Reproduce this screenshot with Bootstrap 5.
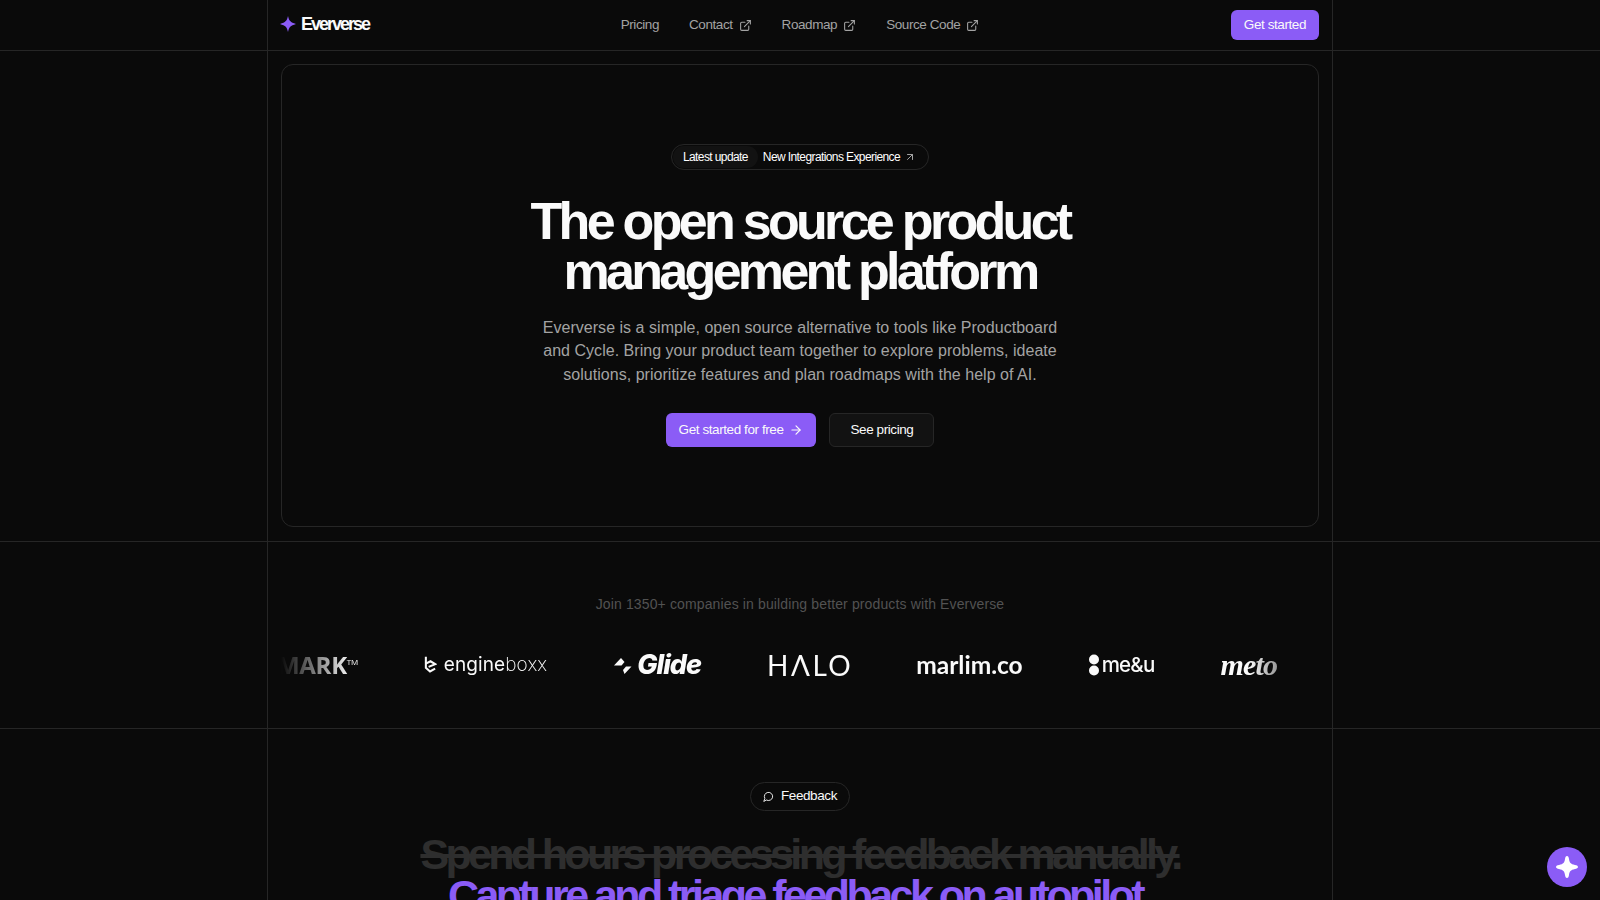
<!DOCTYPE html>
<html lang="en">

<head>
    <meta charset="UTF-8" />
    <meta name="viewport" content="width=device-width, initial-scale=1" />
    <title>Eververse</title>
    <link href="https://cdn.jsdelivr.net/npm/bootstrap@5.3.0/dist/css/bootstrap.min.css" rel="stylesheet" />
    <style>
        html, body { height: 900px; overflow: hidden; }
        body { background: #0a0a0a; color: #fafafa; font-family: "Liberation Sans", Arial, sans-serif; }
        a { text-decoration: none; }
        .ev-band { border-bottom: 1px solid #262626; }
        .ev-shell { width: 1066px; margin: 0 auto; border-inline: 1px solid #262626; padding-inline: 13px; }
        .ev-head { height: 50px; }
        .ev-side { flex: 1 1 0; }
        .ev-brand { font-size: 18px; font-weight: 700; letter-spacing: -2px; color: #fafafa; line-height: 26px; gap: 5px; }
        .ev-brand svg { width: 16px; height: 16px; margin-left: -1px; }
        .ev-link { font-size: 13.5px; letter-spacing: -0.42px; color: #a3a3a3; gap: 6px; }
        .ev-link svg { width: 13px; height: 13px; }
        .ev-nav { gap: 30px; }
        .ev-btn-primary { background: #8b5cf6; border: 0; color: #fafafa; font-size: 13.5px; letter-spacing: -0.42px; border-radius: 6px; height: 30px; padding: 0 13px; }
        .ev-hero-wrap { padding: 13px 13px 14px; }
        .ev-hero { height: 463px; border: 1px solid #262626; border-radius: 12px; padding-top: 79px; }
        .ev-pill { height: 26px; border: 1px solid #262626; border-radius: 13px; font-size: 12px; letter-spacing: -0.6px; padding: 1px 12px 1px 1px; }
        .ev-pill-tag { background: #121212; border-radius: 12px; padding: 0 10px; height: 22px; line-height: 22px; margin-right: 5px; }
        .ev-pill svg { width: 12px; height: 12px; margin-left: 4px; color: #a3a3a3; }
        .ev-title { font-size: 52px; line-height: 50px; font-weight: 700; letter-spacing: -3.7px; margin: 26px 0 0; }
        .ev-lede { width: 530px; font-size: 16px; letter-spacing: 0.03px; line-height: 23.4px; color: #a3a3a3; margin: 20px 0 0; }
        .ev-cta { margin-top: 27px; gap: 13px; }
        .ev-cta .ev-btn-primary { height: 34px; padding: 0 13px; }
        .ev-cta svg { width: 14px; height: 14px; margin-left: 6px; }
        .ev-btn-dark { background: #121212; border: 1px solid #262626; color: #fafafa; font-size: 13.5px; letter-spacing: -0.42px; border-radius: 6px; height: 34px; padding: 0 20px; }
        .ev-logos { height: 186px; padding-top: 52px; }
        .ev-join { font-size: 14px; letter-spacing: 0.13px; color: #525252; text-align: center; line-height: 20px; margin: 0; }
        .ev-strip { margin-top: 21px; height: 60px; gap: 66px; overflow: hidden; color: #fafafa;
            -webkit-mask-image: linear-gradient(to right, transparent, #000 70px, #000 calc(100% - 70px), transparent);
            mask-image: linear-gradient(to right, transparent, #000 70px, #000 calc(100% - 70px), transparent); }
        .ev-mark { flex: none; white-space: nowrap; }
        .ev-mark-first { margin-left: -4px; font-size: 24px; font-weight: 700; font-family: "Open Sans", sans-serif; letter-spacing: -0.3px; }
        .ev-mark-first sup { font-size: 8px; top: -1.1em; font-weight: 400; }
        .ev-mark-engine { font-size: 19px; font-family: "Inter", sans-serif; font-weight: 400; letter-spacing: 0.1px; }
        .ev-mark-engine b { font-weight: 200; }
        .ev-mark-engine svg { width: 13px; height: 20px; margin-right: 7px; }
        .ev-mark-glide { font-size: 27px; font-weight: 800; font-style: italic; font-family: "Inter", sans-serif; letter-spacing: -1px; }
        .ev-mark-glide svg { width: 19px; height: 19px; margin-right: 5px; }
        .ev-mark-halo { font-size: 28px; font-family: "Lato", sans-serif; font-weight: 400; letter-spacing: 2.5px; margin-right: -3px; }
        .ev-mark-marlim { font-size: 24.5px; font-family: "Lato", sans-serif; font-weight: 700; }
        .ev-mark-meu { font-size: 20.5px; font-family: "Inter", sans-serif; font-weight: 500; letter-spacing: -0.8px; }
        .ev-mark-meu svg { width: 10px; height: 22px; margin-right: 3px; }
        .ev-mark-meto { font-size: 30px; font-family: "Liberation Serif", serif; font-weight: 700; font-style: italic; letter-spacing: -0.8px; margin-top: -2px; }
        .ev-feature { padding-top: 53px; height: 300px; }
        .ev-tag { width: 100px; height: 29px; border: 1px solid #262626; border-radius: 15px; font-size: 13.5px; letter-spacing: -0.42px; }
        .ev-tag svg { width: 11px; height: 11px; margin-right: 7px; }
        .ev-h2 { font-size: 43px; line-height: 41px; font-weight: 700; letter-spacing: -3.67px; margin: 23px 0 0; white-space: nowrap; }
        .ev-struck { color: #2e2e2e; text-decoration: line-through; }
        .ev-accent { color: #8b5cf6; display: inline-block; letter-spacing: -3.55px; padding-right: 10px; }
        .ev-fab { position: fixed; right: 13px; bottom: 13px; width: 40px; height: 40px; border-radius: 50%; background: #8b5cf6; border: 0; padding: 0; }
        .ev-fab svg { width: 24px; height: 24px; }
    </style>
</head>

<body>
    <header class="ev-band">
        <div class="ev-shell ev-head d-flex align-items-center">
            <div class="ev-side">
                <a class="ev-brand d-inline-flex align-items-center" href="#">
                    <svg viewBox="0 0 24 24" fill="#8b5cf6"><path d="M12 0c1.500 7 3.500 9.500 12 12-8.500 2.500-10.500 5-12 12-1.500-7-3.500-9.500-12-12 8.500-2.500 10.500-5 12-12z" /></svg>
                    Eververse
                </a>
            </div>
            <nav class="d-flex ev-nav">
                <a class="ev-link" href="#">Pricing</a>
                <a class="ev-link d-flex align-items-center" href="#">Contact
                    <svg viewBox="0 0 24 24" fill="none" stroke="currentColor" stroke-width="2" stroke-linecap="round" stroke-linejoin="round"><path d="M15 3h6v6" /><path d="M10 14 21 3" /><path d="M18 13v6a2 2 0 0 1-2 2H5a2 2 0 0 1-2-2V8a2 2 0 0 1 2-2h6" /></svg></a>
                <a class="ev-link d-flex align-items-center" href="#">Roadmap
                    <svg viewBox="0 0 24 24" fill="none" stroke="currentColor" stroke-width="2" stroke-linecap="round" stroke-linejoin="round"><path d="M15 3h6v6" /><path d="M10 14 21 3" /><path d="M18 13v6a2 2 0 0 1-2 2H5a2 2 0 0 1-2-2V8a2 2 0 0 1 2-2h6" /></svg></a>
                <a class="ev-link d-flex align-items-center" href="#">Source Code
                    <svg viewBox="0 0 24 24" fill="none" stroke="currentColor" stroke-width="2" stroke-linecap="round" stroke-linejoin="round"><path d="M15 3h6v6" /><path d="M10 14 21 3" /><path d="M18 13v6a2 2 0 0 1-2 2H5a2 2 0 0 1-2-2V8a2 2 0 0 1 2-2h6" /></svg></a>
            </nav>
            <div class="ev-side d-flex justify-content-end">
                <button class="btn ev-btn-primary" type="button">Get started</button>
            </div>
        </div>
    </header>

    <section class="ev-band">
        <div class="ev-shell ev-hero-wrap">
            <div class="ev-hero d-flex flex-column align-items-center text-center">
                <a class="ev-pill d-inline-flex align-items-center text-white" href="#">
                    <span class="ev-pill-tag">Latest update</span>
                    New Integrations Experience
                    <svg viewBox="0 0 24 24" fill="none" stroke="currentColor" stroke-width="2" stroke-linecap="round" stroke-linejoin="round"><path d="M7 7h10v10" /><path d="M7 17 17 7" /></svg>
                </a>
                <h1 class="ev-title">The open source product<br />management platform</h1>
                <p class="ev-lede">Eververse is a simple, open source alternative to tools like Productboard and Cycle. Bring your product team together to explore problems, ideate solutions, prioritize features and plan roadmaps with the help of AI.</p>
                <div class="d-flex ev-cta">
                    <button class="btn ev-btn-primary d-flex align-items-center" type="button">Get started for free
                        <svg viewBox="0 0 24 24" fill="none" stroke="currentColor" stroke-width="2" stroke-linecap="round" stroke-linejoin="round"><path d="M5 12h14" /><path d="m12 5 7 7-7 7" /></svg></button>
                    <button class="btn ev-btn-dark" type="button">See pricing</button>
                </div>
            </div>
        </div>
    </section>

    <section class="ev-band">
        <div class="ev-shell ev-logos">
            <p class="ev-join">Join 1350+ companies in building better products with Eververse</p>
            <div class="ev-strip d-flex align-items-center">
                <span class="ev-mark ev-mark-first">MARK<sup>TM</sup></span>
                <span class="ev-mark ev-mark-engine d-flex align-items-center">
                    <svg viewBox="0 0 14 20" fill="none" stroke="currentColor" stroke-width="2.2"><path d="M2 1v12l4.500 4 5.500-3" /><path d="M2 8.500 7 6l5 3-7 3" /></svg>engine<b>boxx</b></span>
                <span class="ev-mark ev-mark-glide d-flex align-items-center">
                    <svg viewBox="0 0 19 19" fill="currentColor"><path d="M8 2 1 9.500h7.500L11.500 6z" /><path d="M11 10.500h7.500L11.500 18l-1.500-4 3-3.500z" /></svg>Glide</span>
                <span class="ev-mark ev-mark-halo">HΛLO</span>
                <span class="ev-mark ev-mark-marlim">marlim.co</span>
                <span class="ev-mark ev-mark-meu d-flex align-items-center">
                    <svg viewBox="0 0 10 22" fill="currentColor"><circle cx="5" cy="5.500" r="5" /><circle cx="5" cy="16.500" r="5" /></svg>me&amp;u</span>
                <span class="ev-mark ev-mark-meto">meto</span>
            </div>
        </div>
    </section>

    <section>
        <div class="ev-shell ev-feature d-flex flex-column align-items-center text-center">
            <span class="ev-tag d-inline-flex align-items-center justify-content-center">
                <svg viewBox="0 0 24 24" fill="none" stroke="currentColor" stroke-width="2" stroke-linecap="round" stroke-linejoin="round"><path d="M7.9 20A9 9 0 1 0 4 16.1L2 22Z" /></svg>Feedback</span>
            <h2 class="ev-h2"><span class="ev-struck">Spend hours processing feedback manually.</span><br /><span class="ev-accent">Capture and triage feedback on autopilot</span></h2>
        </div>
    </section>

    <button class="ev-fab d-flex align-items-center justify-content-center" type="button" aria-label="Open assistant">
        <svg viewBox="0 0 24 24" fill="#fff"><path d="M12 1c1.200 0 1.700 1 2 3 .5 3.500 1.500 5 6 6 1.500.3 3 .7 3 2s-1.500 1.700-3 2c-4.500 1-5.500 2.500-6 6-.3 2-.8 3-2 3s-1.700-1-2-3c-.5-3.500-1.500-5-6-6-1.500-.3-3-.7-3-2s1.500-1.700 3-2c4.500-1 5.500-2.500 6-6 .3-2 .8-3 2-3z" /></svg>
    </button>

    <script src="https://cdn.jsdelivr.net/npm/bootstrap@5.3.0/dist/js/bootstrap.bundle.min.js"></script>
</body>

</html>
